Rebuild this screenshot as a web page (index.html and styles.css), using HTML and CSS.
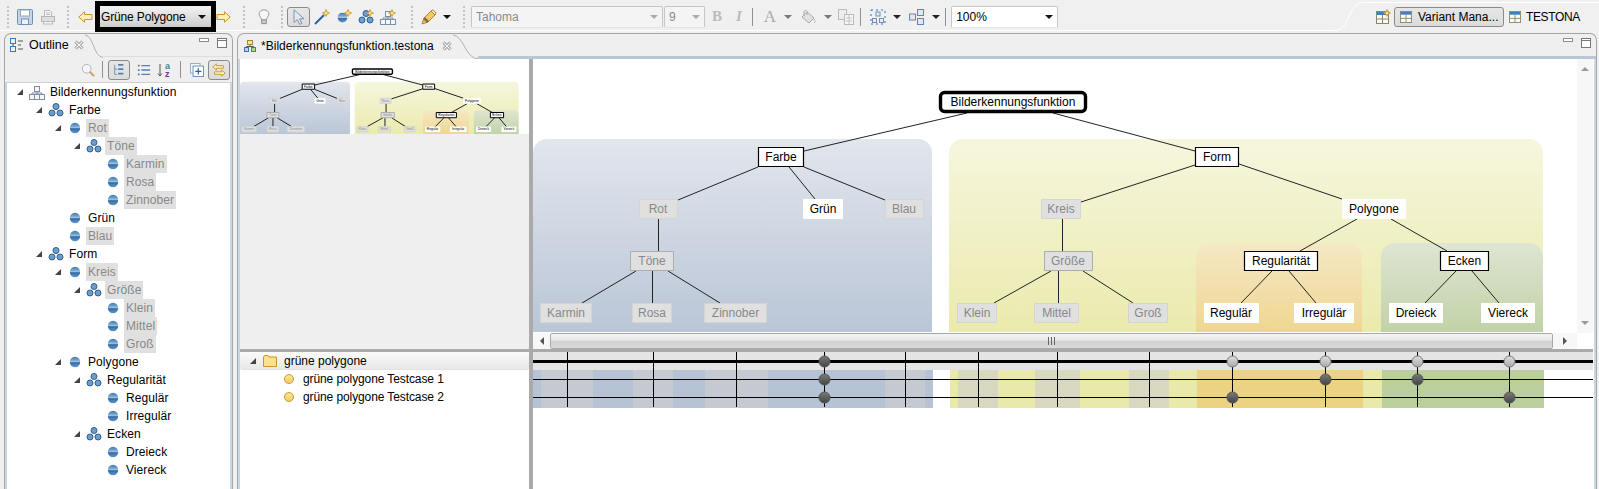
FILE: index.html
```html
<!DOCTYPE html>
<html lang="en">
<head>
    <meta charset="UTF-8">
    <title>TESTONA - Bilderkennungsfunktion</title>
    <link rel="stylesheet" href="styles.css">
</head>
<body>

<!-- shared icons -->
<svg class="defs" aria-hidden="true">
    <defs>
        <linearGradient id="gBall" x1="0" y1="0" x2="0" y2="1">
            <stop offset="0" stop-color="#3f78ae"/>
            <stop offset=".3" stop-color="#6f9fc9"/>
            <stop offset=".5" stop-color="#a9c6e0"/>
            <stop offset=".56" stop-color="#2f6ba6"/>
            <stop offset="1" stop-color="#5f98ca"/>
        </linearGradient>
        <linearGradient id="gBlue" x1="0" y1="0" x2="0" y2="1">
            <stop offset="0" stop-color="#e2e6ed"/>
            <stop offset="1" stop-color="#b5c2d4"/>
        </linearGradient>
        <linearGradient id="gYellow" x1="0" y1="0" x2="0" y2="1">
            <stop offset="0" stop-color="#f6f6de"/>
            <stop offset="1" stop-color="#e9e9a8"/>
        </linearGradient>
        <linearGradient id="gOrange" x1="0" y1="0" x2="0" y2="1">
            <stop offset="0" stop-color="#f5e8c5"/>
            <stop offset="1" stop-color="#edd184"/>
        </linearGradient>
        <linearGradient id="gGreen" x1="0" y1="0" x2="0" y2="1">
            <stop offset="0" stop-color="#dfe5d2"/>
            <stop offset="1" stop-color="#b9cd9c"/>
        </linearGradient>
        <linearGradient id="gDark" x1="0" y1="0" x2="0" y2="1">
            <stop offset="0" stop-color="#7a7a7a"/>
            <stop offset="1" stop-color="#444"/>
        </linearGradient>
        <linearGradient id="gLight" x1="0" y1="0" x2="0" y2="1">
            <stop offset="0" stop-color="#dedede"/>
            <stop offset="1" stop-color="#aaa"/>
        </linearGradient>
        <symbol id="iBall" viewBox="0 0 16 16">
            <circle cx="8" cy="8" r="5.2" fill="url(#gBall)"/>
        </symbol>
        <symbol id="iBalls" viewBox="0 0 16 16">
            <g fill="#6f9fc9" stroke="#2b5f96">
                <circle cx="8" cy="4.5" r="3"/>
                <circle cx="4" cy="11" r="3"/>
                <circle cx="12" cy="11" r="3"/>
            </g>
        </symbol>
        <symbol id="iRoot" viewBox="0 0 16 16">
            <g fill="#f4f6f9" stroke="#7c8ea8">
                <rect x="5.5" y="2.5" width="5" height="5"/>
                <rect x=".5" y="10.5" width="5" height="5"/>
                <rect x="5.5" y="10.5" width="5" height="5"/>
                <rect x="10.5" y="10.5" width="5" height="5"/>
                <path d="M8 7.5V10.5M3 10.5V9H13V10.5" fill="none"/>
            </g>
        </symbol>
        <symbol id="iStar" viewBox="0 0 8 8">
            <path d="M4 .5L5 3 7.5 4 5 5 4 7.5 3 5 .5 4 3 3Z" fill="#ffe27a" stroke="#c4952a" stroke-width=".8"/>
        </symbol>
        <symbol id="iTable" viewBox="0 0 13 13">
            <rect x=".5" y=".5" width="12" height="12" fill="#fbfbf4" stroke="#8a8a6a"/>
            <rect x="1" y="1" width="11" height="3" fill="#3f7fc8"/>
            <path d="M1 8H12M6.5 4V12" stroke="#8a8a6a"/>
        </symbol>
        <symbol id="iClose" viewBox="0 0 10 10">
            <path d="M1.5 1.5L8.5 8.5M8.5 1.5L1.5 8.5" stroke="#8c8c8c" stroke-width="3"/>
            <path d="M1.5 1.5L8.5 8.5M8.5 1.5L1.5 8.5" stroke="#f4f4f4" stroke-width="1.3"/>
        </symbol>
        <symbol id="iMin" viewBox="0 0 10 10">
            <rect x=".5" y=".5" width="9" height="3" fill="#fff" stroke="#8c8c8c"/>
        </symbol>
        <symbol id="iMax" viewBox="0 0 10 10">
            <rect x=".5" y=".5" width="9" height="9" fill="#fff" stroke="#777"/>
            <path d="M1 2.5H9" stroke="#777"/>
        </symbol>
    </defs>
</svg>

<!-- main toolbar -->
<div class="toolbar">
    <svg class="persp-curve" width="1599" height="33"><path d="M0 30.5H1335C1350 30.5 1347 3 1364 2.5H1599"/></svg>

    <div class="tb-group w-file">
        <span class="handle"></span>
        <svg class="ico first" viewBox="0 0 16 16"><rect x=".5" y=".5" width="15" height="15" rx="1" fill="#c6d5e6" stroke="#6f8fb5"/><rect x="3.5" y="1" width="9" height="6" fill="#fff" stroke="#8fa8c6"/><rect x="4.5" y="10" width="7" height="5.5" fill="#eef2f7" stroke="#6f8fb5"/></svg>
        <svg class="ico" viewBox="0 0 16 16"><path d="M4.5 1.5H10L11.500 3V7.5H4.5Z" fill="#f5f5f5" stroke="#bbb"/><rect x="1.5" y="7.5" width="13" height="5" fill="#ddd" stroke="#b5b5b5"/><rect x="3.5" y="12.5" width="9" height="2.5" fill="#f3f3f3" stroke="#bbb"/><path d="M6 4H10M6 5.5H10" stroke="#c4c4c4"/></svg>
    </div>

    <div class="tb-group w-nav">
        <span class="handle"></span>
        <svg class="arrow-nav" viewBox="0 0 15 12"><path d="M.8 6L6.5.8V3.5H14V8.5H6.5V11.2Z" fill="#fdeeb8" stroke="#c8962a"/></svg>
        <div class="variant-box"><div class="variant-combo"><span>Grüne Polygone</span><i class="tri-dark"></i></div></div>
        <svg class="arrow-nav flat" viewBox="0 0 15 12"><path d="M14.2 6L8.5.8V3.5H1V8.5H8.5V11.2Z" fill="#fdeeb8" stroke="#c8962a"/></svg>
    </div>

    <div class="tb-group w-hint">
        <span class="handle"></span>
        <svg class="ico bulb" viewBox="0 0 16 16"><path d="M8 .8C5 .8 3.2 3 3.2 5.2 3.2 7.6 5.5 8.6 5.5 11H10.5C10.5 8.6 12.8 7.6 12.8 5.2 12.8 3 11 .8 8 .8Z" fill="#f7f7f7" stroke="#9a9a9a"/><rect x="5.8" y="11" width="4.4" height="3.6" fill="#c9d0d8" stroke="#8c8c8c"/></svg>
    </div>

    <div class="tb-group w-tools">
        <span class="handle"></span>
        <button class="tb-toggle pointer"><svg class="ico" viewBox="0 0 16 16"><path d="M3 .8V13.5L6.3 10.6 8.6 15.4 10.8 14.4 8.6 9.8H13Z" fill="#e4e9f0" stroke="#7d93b2"/></svg></button>
        <svg class="ico" viewBox="0 0 16 16"><path d="M1 15L10 6" stroke="#2c5f9c" stroke-width="2"/><use href="#iStar" x="8" y="0" width="8" height="8"/></svg>
        <svg class="ico" viewBox="0 0 16 16"><use href="#iBall" x="-1" y="1" width="15" height="15"/><use href="#iStar" x="8" y="0" width="8" height="8"/></svg>
        <svg class="ico" viewBox="0 0 16 16"><use href="#iBalls"/><use href="#iStar" x="8" y="0" width="8" height="8"/></svg>
        <svg class="ico" viewBox="0 0 16 16"><use href="#iRoot"/><use href="#iStar" x="8" y="0" width="8" height="8"/></svg>
    </div>

    <div class="tb-group w-pen">
        <span class="handle"></span>
        <svg class="ico pen" viewBox="0 0 16 16"><path d="M1 15L3 9 10 2 14 6 7 13Z" fill="#f7c95e" stroke="#b0842c"/><path d="M3 9L7 13" stroke="#7d6a50" stroke-width="2.5"/><path d="M10 2L12 .8 15 4 14 6Z" fill="#f9f0d8" stroke="#b0842c"/></svg>
        <i class="tri-dark"></i>
    </div>

    <div class="tb-group">
        <span class="handle"></span>
        <div class="combo font-name"><span>Tahoma</span><i class="tri-grey"></i></div>
        <div class="combo font-size"><span>9</span><i class="tri-grey"></i></div>
        <span class="fmt bold">B</span>
        <span class="fmt ital">I</span>
        <span class="sep"></span>
        <span class="fmt color-a">A</span>
        <i class="tri-grey small"></i>
        <svg class="ico bucket" viewBox="0 0 16 16"><path d="M7 3L14 9 9 14 2 8Z" fill="#e2e2e2" stroke="#aaa"/><path d="M4 7V2.500C4 1 7 1 7 2.500V6" fill="none" stroke="#aaa"/><path d="M14 10C15 12 15.500 13 14.500 14" fill="none" stroke="#bbb"/></svg>
        <i class="tri-grey small"></i>
        <svg class="ico copy" viewBox="0 0 16 16"><rect x=".5" y=".5" width="8" height="10" fill="#eee" stroke="#b9b9b9"/><rect x="6.5" y="5.5" width="9" height="10" fill="#f5f5f5" stroke="#b9b9b9"/><path d="M8 9H14M8 12H14M11 6V15" stroke="#c6c6c6"/></svg>
        <span class="sep narrow"></span>
        <svg class="ico layout" viewBox="0 0 16 16"><path d="M1 1H15V15H1Z" fill="none" stroke="#3c6db0" stroke-dasharray="2 3"/><rect x="2.5" y="9.5" width="4" height="4" fill="#e7edf5" stroke="#6f8fb5"/><rect x="9.5" y="9.5" width="4" height="4" fill="#e7edf5" stroke="#6f8fb5"/><rect x="6" y="3" width="4" height="4" fill="#e7edf5" stroke="#6f8fb5"/></svg>
        <i class="tri-dark small"></i>
        <svg class="ico layout2" viewBox="0 0 16 16"><rect x="8.5" y=".5" width="6" height="6" fill="#dfe8f3" stroke="#5f85b5"/><rect x="8.5" y="9.5" width="6" height="6" fill="#dfe8f3" stroke="#5f85b5"/><rect x=".5" y="5" width="6" height="6" fill="#dfe8f3" stroke="#5f85b5"/></svg>
        <i class="tri-dark small"></i>
        <span class="sep zoom-sep"></span>
        <div class="combo zoom-level"><span>100%</span><i class="tri-dark"></i></div>
    </div>

    <div class="tb-right">
        <svg class="persp-new" viewBox="0 0 15 15"><use href="#iTable" x="0" y="2" width="13" height="13"/><use href="#iStar" x="7" y="0" width="8" height="8"/></svg>
        <button class="tb-toggle persp-btn"><svg class="tbl" viewBox="0 0 13 13"><use href="#iTable"/></svg>Variant Mana...</button>
        <svg class="tbl" viewBox="0 0 13 13"><use href="#iTable"/></svg>
        <span class="persp-name">TESTONA</span>
    </div>
</div>

<div class="workbench">

    <!-- outline view -->
    <section class="panel outline">
        <div class="panel-head">
            <div class="tab">
                <svg class="tab-icon" viewBox="0 0 14 14"><rect x=".5" y=".5" width="5" height="5" fill="#e9f1fa" stroke="#3c78c0"/><rect x=".5" y="8.5" width="5" height="5" fill="#e9f1fa" stroke="#3c78c0"/><path d="M8 3H13M8 7H11M8 11H13M3 6V8" stroke="#555"/></svg>
                <span>Outline</span>
                <svg class="tab-close" viewBox="0 0 10 10"><use href="#iClose"/></svg>
            </div>
            <svg class="tab-curve" width="18" height="24"><path d="M0 1C9 2 8 22 18 23.5"/></svg>
            <div class="head-fill">
                <svg class="view-btn" viewBox="0 0 10 10"><use href="#iMin"/></svg>
                <svg class="view-btn" viewBox="0 0 10 10"><use href="#iMax"/></svg>
            </div>
        </div>
        <div class="outline-tools">
            <svg class="ot-search" viewBox="0 0 16 16"><circle cx="6.5" cy="6.5" r="5" fill="#f4f7fa" stroke="#aaa"/><path d="M10 10L15 15" stroke="#c9a26a" stroke-width="2.4"/></svg>
            <span class="sep ot-sep1"></span>
            <button class="tb-toggle mini ot-tree"><svg viewBox="0 0 16 16"><path d="M3 2V13H6M3 7H6" fill="none" stroke="#6f8fb5"/><path d="M7 2H13M7 7H13M7 12H13" stroke="#5a7fae" stroke-width="2"/></svg></button>
            <svg class="ot-list" viewBox="0 0 16 16"><path d="M5 3H15M5 8H15M5 13H15" stroke="#5a7fae" stroke-width="1.6"/><path d="M1 3H3M1 8H3M1 13H3" stroke="#5a7fae" stroke-width="2"/></svg>
            <svg class="ot-sort" viewBox="0 0 16 18"><path d="M3 3V15M1 12.5L3 15 5 12.5" fill="none" stroke="#555"/><text class="sort-a" x="8" y="8.2">a</text><text class="sort-z" x="8" y="15.5">z</text></svg>
            <span class="sep ot-sep2"></span>
            <svg class="ot-expand" viewBox="0 0 16 16"><rect x=".5" y=".5" width="11" height="11" fill="#f2f6fb" stroke="#8fa6c2"/><rect x="3.5" y="3.5" width="12" height="12" fill="#fff" stroke="#5f85b5"/><path d="M9.5 6V13M6 9.5H13" stroke="#2c5f9c" stroke-width="1.4"/></svg>
            <button class="tb-toggle mini ot-link"><svg viewBox="0 0 16 16"><path d="M1 4.5L5 1V3H13V6H5V8Z" fill="#fdeeb8" stroke="#c8962a"/><path d="M15 11.5L11 8V10H3V13H11V15Z" fill="#fdeeb8" stroke="#c8962a"/></svg></button>
        </div>
        <div class="panel-body">
            <ul class="tree">
                <li class="d0"><i class="twisty"></i><svg class="node-ico"><use href="#iRoot"/></svg><span>Bilderkennungsfunktion</span></li>
                <li class="d1"><i class="twisty"></i><svg class="node-ico"><use href="#iBalls"/></svg><span>Farbe</span></li>
                <li class="d2"><i class="twisty"></i><svg class="node-ico"><use href="#iBall"/></svg><span class="off">Rot</span></li>
                <li class="d3"><i class="twisty"></i><svg class="node-ico"><use href="#iBalls"/></svg><span class="off">Töne</span></li>
                <li class="d4"><i class="twisty none"></i><svg class="node-ico"><use href="#iBall"/></svg><span class="off">Karmin</span></li>
                <li class="d4"><i class="twisty none"></i><svg class="node-ico"><use href="#iBall"/></svg><span class="off">Rosa</span></li>
                <li class="d4"><i class="twisty none"></i><svg class="node-ico"><use href="#iBall"/></svg><span class="off">Zinnober</span></li>
                <li class="d2"><i class="twisty none"></i><svg class="node-ico"><use href="#iBall"/></svg><span>Grün</span></li>
                <li class="d2"><i class="twisty none"></i><svg class="node-ico"><use href="#iBall"/></svg><span class="off">Blau</span></li>
                <li class="d1"><i class="twisty"></i><svg class="node-ico"><use href="#iBalls"/></svg><span>Form</span></li>
                <li class="d2"><i class="twisty"></i><svg class="node-ico"><use href="#iBall"/></svg><span class="off">Kreis</span></li>
                <li class="d3"><i class="twisty"></i><svg class="node-ico"><use href="#iBalls"/></svg><span class="off">Größe</span></li>
                <li class="d4"><i class="twisty none"></i><svg class="node-ico"><use href="#iBall"/></svg><span class="off">Klein</span></li>
                <li class="d4"><i class="twisty none"></i><svg class="node-ico"><use href="#iBall"/></svg><span class="off">Mittel</span></li>
                <li class="d4"><i class="twisty none"></i><svg class="node-ico"><use href="#iBall"/></svg><span class="off">Groß</span></li>
                <li class="d2"><i class="twisty"></i><svg class="node-ico"><use href="#iBall"/></svg><span>Polygone</span></li>
                <li class="d3"><i class="twisty"></i><svg class="node-ico"><use href="#iBalls"/></svg><span>Regularität</span></li>
                <li class="d4"><i class="twisty none"></i><svg class="node-ico"><use href="#iBall"/></svg><span>Regulär</span></li>
                <li class="d4"><i class="twisty none"></i><svg class="node-ico"><use href="#iBall"/></svg><span>Irregulär</span></li>
                <li class="d3"><i class="twisty"></i><svg class="node-ico"><use href="#iBalls"/></svg><span>Ecken</span></li>
                <li class="d4"><i class="twisty none"></i><svg class="node-ico"><use href="#iBall"/></svg><span>Dreieck</span></li>
                <li class="d4"><i class="twisty none"></i><svg class="node-ico"><use href="#iBall"/></svg><span>Viereck</span></li>
            </ul>
        </div>
    </section>

    <!-- editor -->
    <section class="panel editor">
        <div class="panel-head">
            <div class="tab">
                <svg class="tab-icon small" viewBox="0 0 12 12"><rect x="3.5" y=".5" width="5" height="4" fill="#f4e3a8" stroke="#a5872f"/><rect x=".5" y="7.5" width="4" height="4" fill="#bcd3ec" stroke="#3c6db0"/><rect x="7.5" y="7.5" width="4" height="4" fill="#a8d890" stroke="#4f8f35"/><path d="M6 5V6.5H2.5V7.5M6 6.5H9.5V7.5" fill="none" stroke="#555"/></svg>
                <span>*Bilderkennungsfunktion.testona</span>
                <svg class="tab-close" viewBox="0 0 10 10"><use href="#iClose"/></svg>
            </div>
            <svg class="tab-curve" width="25" height="26"><path d="M0 1C11 2 12 24 25 25"/></svg>
            <div class="head-fill keyline">
                <svg class="view-btn" viewBox="0 0 10 10"><use href="#iMin"/></svg>
                <svg class="view-btn" viewBox="0 0 10 10"><use href="#iMax"/></svg>
            </div>
        </div>

        <div class="panel-body editor-grid">
            <div class="overview">
                <svg class="mini-map" width="288" height="75" viewBox="533 56 1044 274" preserveAspectRatio="none"><use href="#diagram"/></svg>
            </div>
            <div class="sash-v"></div>
            <div class="diagram-cell">
                <svg class="canvas" width="1044" height="273" viewBox="533 59 1044 273">
                    <g id="diagram">
                        <rect x="533" y="139" width="399" height="215" rx="14" fill="url(#gBlue)"/>
                        <rect x="949" y="139" width="594" height="215" rx="14" fill="url(#gYellow)"/>
                        <rect x="1196" y="243" width="166" height="112" rx="14" fill="url(#gOrange)"/>
                        <rect x="1381" y="243" width="162" height="112" rx="14" fill="url(#gGreen)"/>

                        <g class="edges">
                            <path d="M967 113L804 151M1053 113L1195 151"/>
                            <path d="M758 167L678 200M789 167L815 199M804 167L885 200"/>
                            <path d="M658.5 219V251M636 271L582 303M652.5 271V303M668 271L720 303"/>
                            <path d="M1195 165L1081 202M1239 164L1342 199"/>
                            <path d="M1062.5 219V251M1051 271L994 303M1058.5 271V303M1083 271L1133 303"/>
                            <path d="M1357 219L1300 251M1391 219L1447 251"/>
                            <path d="M1272 271L1241 303M1289 271L1316 303M1456 271L1425 303M1472 271L1499 303"/>
                        </g>

                        <g class="nodes">
                            <rect class="root" x="940.5" y="92.5" width="145" height="19" rx="4"/><text x="1013" y="106">Bilderkennungsfunktion</text>
                            <rect class="on" x="758.5" y="147.5" width="45" height="19"/><text x="781" y="160.5">Farbe</text>
                            <rect class="on" x="1195.5" y="147.5" width="43" height="19"/><text x="1217" y="160.5">Form</text>
                            <rect class="off" x="639.5" y="199.5" width="38" height="19"/><text class="off" x="658" y="212.5">Rot</text>
                            <rect class="plain" x="803" y="199" width="40" height="20"/><text x="823" y="212.5">Grün</text>
                            <rect class="off" x="885.5" y="199.5" width="38" height="19"/><text class="off" x="904" y="212.5">Blau</text>
                            <rect class="off" x="1041.5" y="199.5" width="39" height="19"/><text class="off" x="1061" y="212.5">Kreis</text>
                            <rect class="plain" x="1342" y="199" width="64" height="20"/><text x="1374" y="212.5">Polygone</text>
                            <rect class="off box" x="630.5" y="251.5" width="43" height="19"/><text class="off" x="652" y="264.5">Töne</text>
                            <rect class="off box" x="1044.5" y="251.5" width="48" height="19"/><text class="off" x="1068" y="264.5">Größe</text>
                            <rect class="on" x="1244.5" y="251.5" width="73" height="19"/><text x="1281" y="264.5">Regularität</text>
                            <rect class="on" x="1440.5" y="251.5" width="48" height="19"/><text x="1464.5" y="264.5">Ecken</text>
                            <rect class="off" x="540.5" y="303.5" width="51" height="19"/><text class="off" x="566" y="316.5">Karmin</text>
                            <rect class="off" x="632.5" y="303.5" width="39" height="19"/><text class="off" x="652" y="316.5">Rosa</text>
                            <rect class="off" x="704.5" y="303.5" width="62" height="19"/><text class="off" x="735.5" y="316.5">Zinnober</text>
                            <rect class="off" x="957.5" y="303.5" width="39" height="19"/><text class="off" x="977" y="316.5">Klein</text>
                            <rect class="off" x="1034.5" y="303.5" width="44" height="19"/><text class="off" x="1056.5" y="316.5">Mittel</text>
                            <rect class="off" x="1128.5" y="303.5" width="39" height="19"/><text class="off" x="1148" y="316.5">Groß</text>
                            <rect class="plain" x="1204" y="303" width="55" height="20"/><text x="1231" y="316.5">Regulär</text>
                            <rect class="plain" x="1294" y="303" width="60" height="20"/><text x="1324" y="316.5">Irregulär</text>
                            <rect class="plain" x="1389" y="303" width="54" height="20"/><text x="1416" y="316.5">Dreieck</text>
                            <rect class="plain" x="1481" y="303" width="54" height="20"/><text x="1508" y="316.5">Viereck</text>
                        </g>
                    </g>
                </svg>
                <div class="vscroll"><i class="sb-up"></i><i class="sb-down"></i></div>
                <div class="hscroll">
                    <span class="sb-btn"><i class="sb-left"></i></span>
                    <div class="thumb"><span class="grip"></span></div>
                    <span class="sb-btn"><i class="sb-right"></i></span>
                </div>
            </div>

            <div class="sash-h"></div>

            <div class="cases">
                <div class="case-folder">
                    <i class="twisty"></i>
                    <svg class="folder" viewBox="0 0 14 12"><path d="M.5 2V11.5H13.5V2H6L5 .5H1.5Z" fill="#fde08a" stroke="#c8962a"/></svg>
                    <span>grüne polygone</span>
                </div>
                <div class="case"><i class="case-dot"></i><span>grüne polygone Testcase 1</span></div>
                <div class="case"><i class="case-dot"></i><span>grüne polygone Testcase 2</span></div>
            </div>
            <div class="sash-v"></div>
            <svg class="matrix" width="1060" height="137" viewBox="533 352 1060 137">
                <rect x="533" y="352" width="1060" height="18" fill="#e4e4e4"/>
                <g class="bands">
                    <rect x="533" y="370" width="352" height="38" fill="#b5c3d5"/>
                    <rect x="541" y="370" width="52" height="38" fill="#c5c9d2"/>
                    <rect x="633" y="370" width="40" height="38" fill="#c5c9d2"/>
                    <rect x="705" y="370" width="63" height="38" fill="#c5c9d2"/>
                    <rect x="885" y="370" width="40" height="38" fill="#c5c9d2"/>
                    <rect x="925" y="370" width="8" height="38" fill="#b5c3d5"/>
                    <rect x="950" y="370" width="247" height="38" fill="#e9e9a9"/>
                    <rect x="958" y="370" width="40" height="38" fill="#d8d8c0"/>
                    <rect x="1035" y="370" width="45" height="38" fill="#d8d8c0"/>
                    <rect x="1129" y="370" width="40" height="38" fill="#d8d8c0"/>
                    <rect x="1197" y="370" width="166" height="38" fill="#ecd283"/>
                    <rect x="1363" y="370" width="19" height="38" fill="#e9e9a9"/>
                    <rect x="1382" y="370" width="162" height="38" fill="#bacf9c"/>
                </g>
                <rect x="533" y="360" width="1060" height="3" fill="#000"/>
                <path class="grid-lines" d="M533 379.5H1593M533 397.5H1593M567.5 352V407M653.5 352V407M736.5 352V407M824.5 352V407M905.5 352V407M978.5 352V407M1057.5 352V407M1149.5 352V407M1232.5 352V407M1325.5 352V407M1417.5 352V407M1509.5 352V407"/>
                <g class="pts dark">
                    <circle cx="824.5" cy="361.5" r="5.5"/>
                    <circle cx="824.5" cy="379.5" r="5.5"/>
                    <circle cx="824.5" cy="397.5" r="5.5"/>
                    <circle cx="1325.5" cy="379.5" r="5.5"/>
                    <circle cx="1417.5" cy="379.5" r="5.5"/>
                    <circle cx="1232.5" cy="397.5" r="5.5"/>
                    <circle cx="1509.5" cy="397.5" r="5.5"/>
                </g>
                <g class="pts light">
                    <circle cx="1232.5" cy="361.5" r="5.5"/>
                    <circle cx="1325.5" cy="361.5" r="5.5"/>
                    <circle cx="1417.5" cy="361.5" r="5.5"/>
                    <circle cx="1509.5" cy="361.5" r="5.5"/>
                </g>
            </svg>
        </div>
    </section>
</div>

</body>
</html>
```

FILE: styles.css
```css
* {
    box-sizing: border-box;
}
html, body {
    margin: 0;
    padding: 0;
    width: 100%;
    height: 100%;
    overflow: hidden;
    background-color: #f0f0f0;
    color: #000;
    font-family: "Liberation Sans", Arial, sans-serif;
    font-size: 12px;
}
.defs {
    position: absolute;
    width: 0;
    height: 0;
}
i {
    display: block;
    flex: none;
}
svg {
    display: block;
    flex: none;
}
ul {
    list-style: none;
    margin: 0;
    padding: 0;
}
button {
    font: inherit;
    padding: 0;
}

/* toolbar */
.toolbar {
    position: relative;
    display: flex;
    align-items: center;
    height: 33px;
}
.persp-curve {
    position: absolute;
    top: 0;
    left: 0;
}
.persp-curve path {
    fill: none;
    stroke: #fff;
}
.tb-group {
    position: relative;
    display: flex;
    align-items: center;
    height: 33px;
    flex: none;
}
.w-file { width: 67px; padding-left: 7px; }
.w-nav { width: 176px; }
.w-hint { width: 38px; }
.w-tools { width: 130px; }
.w-pen { width: 52px; }
.handle {
    width: 2px;
    height: 22px;
    flex: none;
    border-left: 2px dotted #c4c4c4;
}
.ico {
    width: 16px;
    height: 16px;
}
.w-file .first { margin-left: 8px; }
.w-file .ico + .ico { margin-left: 7px; }
.arrow-nav {
    width: 15px;
    height: 12px;
    margin-left: 9px;
}
.arrow-nav.flat { margin-left: 0; }
.variant-box {
    width: 121px;
    height: 31px;
    margin-left: 2px;
    border: 5px solid #000;
}
.variant-combo {
    display: flex;
    align-items: center;
    justify-content: space-between;
    height: 21px;
    padding: 0 5px 0 1px;
    letter-spacing: -.15px;
    background: linear-gradient(#f3f3f3, #cdcdcd);
}
.tri-dark {
    width: 0;
    height: 0;
    border-left: 4px solid transparent;
    border-right: 4px solid transparent;
    border-top: 4px solid #111;
}
.tri-grey {
    width: 0;
    height: 0;
    border-left: 4px solid transparent;
    border-right: 4px solid transparent;
    border-top: 4px solid #aaa;
}
.tri-dark.small { border-top-color: #222; margin-left: 7px; }
.tri-grey.small { border-top-color: #777; margin-left: 8px; }
.bulb { margin-left: 11px; }
.tb-toggle {
    display: flex;
    align-items: center;
    justify-content: center;
    background: linear-gradient(#e6e6e6, #dcdcdc);
    border: 1px solid #8a8a8a;
    border-radius: 3px;
}
.pointer {
    width: 23px;
    height: 20px;
    margin-left: 4px;
    margin-right: 4px;
}
.w-tools svg + svg { margin-left: 6px; }
.pen { margin-left: 8px; margin-right: 6px; }
.combo {
    display: flex;
    align-items: center;
    justify-content: space-between;
    height: 22px;
    padding: 0 4px;
    background-color: #f4f4f4;
    border: 1px solid #c6c6c6;
    border-bottom-color: #e4e4e4;
    border-radius: 2px;
    color: #8a8a8a;
    flex: none;
}
.font-name { width: 192px; margin-left: 6px; }
.font-size { width: 41px; margin-left: 1px; }
.fmt {
    font-family: "Liberation Serif", serif;
    font-size: 15px;
    font-weight: bold;
    color: #bbb;
    flex: none;
}
.bold { margin-left: 7px; }
.ital { margin-left: 14px; font-style: italic; }
.sep {
    width: 1px;
    height: 18px;
    flex: none;
    background-color: #909090;
    margin-left: 10px;
}
.color-a { margin-left: 11px; font-size: 17px; font-weight: normal; color: #aaa; }
.bucket { margin-left: 8px; }
.copy { margin-left: 6px; }
.sep.narrow { margin-left: 6px; }
.layout { margin-left: 9px; }
.layout2 { margin-left: 8px; }
.sep.zoom-sep { margin-left: 5px; }
.zoom-level {
    width: 107px;
    margin-left: 5px;
    background-color: #fff;
    color: #000;
    padding: 0 4px;
}
.tb-right {
    position: relative;
    display: flex;
    align-items: center;
    margin-left: auto;
    padding-right: 19px;
}
.persp-new { width: 15px; height: 15px; margin-right: 3px; }
.tbl { width: 12px; height: 12px; }
.persp-btn {
    width: 110px;
    height: 20px;
    gap: 6px;
    margin-right: 5px;
    justify-content: flex-start;
    padding-left: 5px;
}
.persp-name { margin-left: 5px; letter-spacing: -.35px; }

/* workbench */
.workbench {
    display: flex;
    height: 456px;
    padding-left: 4px;
    padding-right: 2px;
    gap: 4px;
}
.panel {
    display: flex;
    flex-direction: column;
    border: 1px solid #a6a6a6;
    border-bottom: none;
    border-radius: 7px 7px 0 0;
    background-color: #efefef;
    overflow: hidden;
}
.outline { width: 229px; flex: none; }
.editor { flex: 1; min-width: 0; }
.panel-head {
    display: flex;
    flex: none;
}
.outline .panel-head { height: 23px; }
.editor .panel-head { height: 25px; }
.tab {
    display: flex;
    align-items: center;
    flex: none;
    padding-left: 5px;
    padding-bottom: 1px;
}
.editor .tab { padding-left: 6px; }
.tab-icon { width: 14px; height: 14px; margin-right: 5px; }
.tab-icon.small { width: 12px; height: 12px; }
.tab span { font-size: 12.5px; }
.outline .tab span { width: 37px; white-space: nowrap; }
.editor .tab span { font-size: 12px; letter-spacing: .02px; }
.tab-close { width: 10px; height: 10px; margin-left: 8px; margin-right: 1px; }
.tab-curve path {
    fill: none;
    stroke: #b0b0b0;
}
.head-fill {
    flex: 1;
    display: flex;
    justify-content: flex-end;
    padding-top: 4px;
    padding-right: 5px;
    gap: 8px;
    border-bottom: 1px solid #dedede;
}
.head-fill.keyline {
    border-bottom: 3px solid #b9c6d4;
}
.view-btn { width: 10px; height: 10px; }
.panel-body {
    flex: 1;
    min-height: 0;
    border-left: 2px solid #c9d6e3;
    border-right: 2px solid #c9d6e3;
    background-color: #fff;
}

/* outline */
.outline-tools {
    display: flex;
    align-items: center;
    flex: none;
    height: 26px;
    padding-left: 76px;
    border-bottom: 1px solid #d2d2d2;
}
.outline-tools svg { width: 14px; height: 14px; }
.outline-tools .sep { height: 17px; }
.ot-sep1 { margin-left: 7px; }
.ot-sep2 { margin-left: 7px; }
.mini {
    width: 22px;
    height: 20px;
}
.ot-tree { margin-left: 5px; }
.ot-list { margin-left: 7px; }
.outline-tools .ot-sort { width: 16px; height: 18px; margin-left: 6px; }
.ot-expand { margin-left: 9px; }
.ot-link { margin-left: 4px; }
.sort-a {
    font-size: 9px;
    font-weight: bold;
    fill: #2f8f8f;
}
.sort-z {
    font-size: 9px;
    font-weight: bold;
    fill: #7d2f9c;
}
.tree li {
    display: flex;
    align-items: center;
    height: 18px;
}
.tree .d0 { padding-left: 10px; }
.tree .d1 { padding-left: 29px; }
.tree .d2 { padding-left: 48px; }
.tree .d3 { padding-left: 67px; }
.tree .d4 { padding-left: 86px; }
.twisty {
    width: 0;
    height: 0;
    margin-right: 6px;
    border-left: 6px solid transparent;
    border-bottom: 6px solid #444;
}
.twisty.none { visibility: hidden; }
.node-ico { width: 16px; height: 16px; margin-right: 3px; }
.tree span {
    height: 18px;
    line-height: 18px;
    padding: 0 2px;
    letter-spacing: .08px;
}
.tree .off {
    color: #888;
    background-color: #e0e0e0;
}

/* editor */
.editor-grid {
    display: grid;
    grid-template-columns: 289px 4px 1060px;
    grid-template-rows: 290px 3px 1fr;
}
.overview {
    background: linear-gradient(#fff 75px, #efefef 75px);
}
.mini-map {
    --root-width: 1.4px;
    --on-width: 1px;
}
.sash-v { background-color: #aaa; }
.sash-h { grid-column: 1 / 4; background-color: #aaa; }
.diagram-cell {
    display: grid;
    grid-template-columns: 1044px 16px;
    grid-template-rows: 274px 16px;
    background-color: #fff;
}
.edges path {
    fill: none;
    stroke: #222;
    stroke-width: 1px;
    vector-effect: non-scaling-stroke;
}
.nodes rect {
    vector-effect: non-scaling-stroke;
}
.nodes text {
    font-family: "Liberation Sans", Arial, sans-serif;
    font-size: 12px;
    text-anchor: middle;
    fill: #000;
}
.nodes text.off { fill: #888; }
.nodes .root {
    fill: #fff;
    stroke: #000;
    stroke-width: var(--root-width, 3.4px);
}
.nodes .on {
    fill: #fff;
    stroke: #000;
    stroke-width: var(--on-width, 1.2px);
}
.nodes .plain { fill: #fff; }
.nodes rect.off {
    fill: #e0e0e0;
    stroke: #d4d4d4;
    stroke-width: 1px;
}
.nodes rect.off.box { stroke: #adadad; }
.vscroll {
    display: flex;
    flex-direction: column;
    justify-content: space-between;
    align-items: center;
    padding: 8px 0;
    background-color: #f7f7f7;
    grid-row: 1;
    grid-column: 2;
}
.sb-up {
    width: 0;
    height: 0;
    border-left: 4px solid transparent;
    border-right: 4px solid transparent;
    border-bottom: 4px solid #999;
}
.sb-down {
    width: 0;
    height: 0;
    border-left: 4px solid transparent;
    border-right: 4px solid transparent;
    border-top: 4px solid #999;
}
.hscroll {
    display: flex;
    align-items: stretch;
    grid-column: 1;
    grid-row: 2;
    height: 16px;
}
.sb-btn {
    display: flex;
    align-items: center;
    justify-content: center;
    width: 17px;
    flex: none;
    background-color: #f7f7f7;
}
.sb-btn:last-child { width: 24px; }
.sb-left {
    width: 0;
    height: 0;
    border-top: 4px solid transparent;
    border-bottom: 4px solid transparent;
    border-right: 4px solid #555;
}
.sb-right {
    width: 0;
    height: 0;
    border-top: 4px solid transparent;
    border-bottom: 4px solid transparent;
    border-left: 4px solid #555;
}
.thumb {
    flex: 1;
    display: flex;
    align-items: center;
    justify-content: center;
    border: 1px solid #a8a8a8;
    border-radius: 2px;
    background: linear-gradient(#f4f4f4, #e6e6e6 45%, #cfcfcf 55%, #dcdcdc);
}
.grip {
    width: 7px;
    height: 8px;
    border-left: 1px solid #666;
    border-right: 1px solid #666;
    background: linear-gradient(90deg, transparent 2px, #666 2px, #666 3px, transparent 3px);
}
.cases {
    background-color: #fff;
}
.case-folder {
    display: flex;
    align-items: center;
    height: 18px;
    padding-left: 10px;
    background: linear-gradient(#fbfbfb, #e8e8e8);
    border-bottom: 1px solid #e2e2e2;
    border-radius: 2px;
}
.case-folder .twisty { margin-right: 7px; }
.folder { width: 14px; height: 12px; margin-right: 7px; }
.case {
    display: flex;
    align-items: center;
    height: 18px;
    padding-left: 44px;
    letter-spacing: -.1px;
}
.case-dot {
    width: 10px;
    height: 10px;
    margin-right: 9px;
    border-radius: 50%;
    border: 1px solid #c49a3a;
    background: linear-gradient(#fce58f, #f4cd60);
}
.grid-lines {
    fill: none;
    stroke: #000;
    stroke-width: 1px;
}
.pts circle { stroke-width: 1px; }
.pts.dark circle { fill: url(#gDark); stroke: #555; }
.pts.light circle { fill: url(#gLight); stroke: #777; }
```
